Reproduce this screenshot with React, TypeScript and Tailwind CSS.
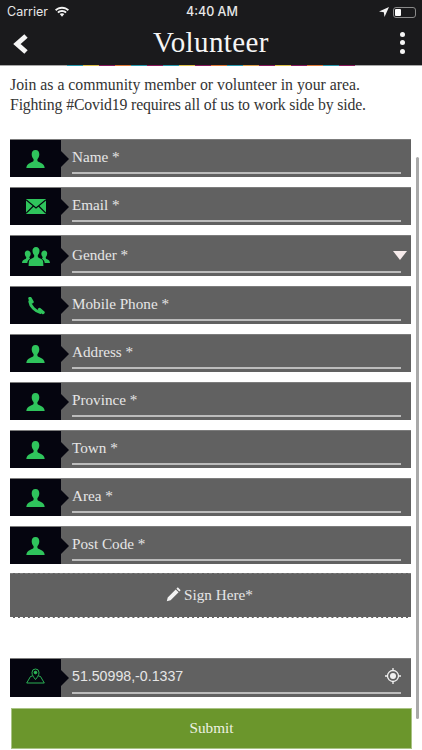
import { ReactNode } from 'react'

const serif = "font-['Georgia','Liberation_Serif','DejaVu_Serif',serif]"

const stripe = ['#2a9bb0', '#e0c04a', '#8a1a5c', '#e07a3a', '#2a9bb0', '#8a1a5c', '#2a9bb0', '#e0c04a', '#8a1a5c', '#e07a3a', '#2a9bb0', '#e0a04a', '#8a1a5c', '#e0c04a', '#8a1a5c', '#e07a3a', '#2a9bb0', '#8a1a5c']

function Person() {
  return (
    <svg width="19" height="18" viewBox="0 0 19 18" fill="#2fc45c">
      <path d="M9.500 0C6.800 0 5.600 2 5.700 4.600c.1 2 .9 3.600 1.900 4.600v1.300c0 1-1.500 1.600-3.600 2.500C2 13.800.7 14.900.3 18h18.400c-.4-3.100-1.700-4.200-3.700-5-2.100-.9-3.600-1.500-3.600-2.500V9.200c1-1 1.800-2.600 1.900-4.600C13.400 2 12.200 0 9.500 0z" />
    </svg>
  )
}

function Mail() {
  return (
    <svg width="20" height="15" viewBox="0 0 20 15">
      <rect width="20" height="15" fill="#2fc45c" />
      <path d="M0 .8 10 9 20 .8M0 14.300 7.400 7M20 14.300 12.600 7" fill="none" stroke="#05050f" strokeWidth="1.100" />
    </svg>
  )
}

function Group() {
  return (
    <svg width="28" height="19" viewBox="0 0 28 19" fill="#2fc45c">
      <path d="M14 0c-2.400 0-3.600 1.900-3.500 4.100.1 1.800.8 3.200 1.700 4.100v1.300c0 .9-1.300 1.400-3 2.200-1.300.6-2.200 1.500-2.400 3.300l-.2 4h14.800l-.2-4c-.2-1.800-1.100-2.700-2.400-3.300-1.700-.8-3-1.300-3-2.200V8.200c.9-.9 1.600-2.300 1.700-4.100C17.600 1.900 16.400 0 14 0z" />
      <path d="M5.500 3.500C3.700 3.500 2.700 5 2.800 6.800c.1 1.500.7 2.600 1.400 3.300v1c0 .7-1 1.100-2.300 1.700C.9 13.300.2 14.200 0 16h5.300c.2-2 1.200-3.400 2.900-4.200-.3-.4-.8-.7-.8-1.200v-.5c.7-.7 1.200-1.800 1.300-3.300C8.800 5 7.300 3.500 5.500 3.500z" />
      <path d="M22.500 3.500c1.800 0 2.800 1.500 2.700 3.300-.1 1.500-.7 2.600-1.400 3.300v1c0 .7 1 1.100 2.300 1.700 1 .5 1.700 1.400 1.900 3.200h-5.300c-.2-2-1.200-3.400-2.900-4.200.3-.4.8-.7.8-1.200v-.5c-.7-.7-1.200-1.800-1.300-3.300-.1-1.800 1.400-3.300 3.200-3.300z" />
    </svg>
  )
}

function Phone() {
  return (
    <svg width="18" height="18" viewBox="0 0 18 18" fill="none" stroke="#2fc45c" strokeLinecap="round">
      <path d="M2.700 4.500C3.300 9 8 14.500 13.500 15.500" strokeWidth="2.800" />
      <path d="M3 1.500 5 4.800M12.500 12.500l3.500 3" strokeWidth="3.400" />
    </svg>
  )
}

function MapPin() {
  return (
    <svg width="19" height="16" viewBox="0 0 19 16" fill="none" stroke="#2fc45c" strokeWidth="0.9">
      <path d="M9.500 11.500C7.500 9 6 7.300 6 4.500a3.500 3.500 0 0 1 7 0C13 7.300 11.500 9 9.500 11.500z" />
      <circle cx="9.500" cy="4.500" r="1.300" fill="#2fc45c" />
      <path d="M6.500 8 4.500 8.500 .7 15h17.600L14.500 8.500l-2-.5" />
    </svg>
  )
}

function Row({ icon, label, h = 'h-[38px]', sans, right, iconClass = '' }: { icon: ReactNode; label: string; h?: string; sans?: boolean; right?: ReactNode; iconClass?: string }) {
  return (
    <div className={`flex ${h} bg-[#616161] border-t border-[#7c7c7c]`}>
      <div className="relative flex w-[51px] shrink-0 items-center justify-center bg-[#05050f]">
        <div className={`flex ${iconClass}`}>{icon}</div>
        <div className="absolute top-1/2 -right-[8px] -translate-y-1/2 border-y-[8px] border-l-[8px] border-y-transparent border-l-[#05050f]" />
      </div>
      <div className="flex min-w-0 flex-1 flex-col pl-[11px] pr-[10px]">
        <div className={`flex flex-1 items-center justify-between pt-[3px] ${sans ? "font-['Liberation_Sans',sans-serif] text-[14.200px]" : `${serif} text-[15.200px]`} text-[#e6e6e6]`}>
          <span>{label}</span>
          {right}
        </div>
        <div className="mb-[3px] h-[2px] bg-[#bcbcbc]" />
      </div>
    </div>
  )
}

export default function App() {
  return (
    <div className="relative h-[750px] w-[422px] overflow-hidden bg-white">
      {/* header */}
      <div className="bg-[#1a1a1c]">
        <div className="flex h-[22px] items-center justify-between pl-[7px] pr-[6px] pt-[2px] font-['Inter',sans-serif] text-[12.500px] text-[#e8e8e8]">
          <div className="flex items-center gap-[6px]">
            <span>Carrier</span>
            <svg width="16" height="12" viewBox="0 0 16 12" fill="#f2f2f2">
              <path d="M8 2.800c2.200 0 4.200.8 5.700 2.200l1.300-1.400C13.100 1.800 10.700.7 8 .7S2.900 1.800 1 3.600L2.300 5C3.800 3.600 5.800 2.800 8 2.800z" />
              <path d="M8 6c1.300 0 2.500.5 3.400 1.300l1.300-1.400C11.400 4.700 9.800 4 8 4s-3.400.7-4.700 1.900l1.300 1.400C5.500 6.500 6.700 6 8 6z" />
              <path d="M8 7.200c-.9 0-1.700.3-2.300.9L8 10.700l2.300-2.600c-.6-.6-1.400-.9-2.300-.9z" />
            </svg>
          </div>
          <span className="absolute left-[186px] font-medium">4:40 AM</span>
          <div className="flex items-center gap-[4px]">
            <svg width="10" height="10" viewBox="0 0 10 10" fill="#f2f2f2">
              <path d="M10 0 0 4.500 4.800 5.200 5.500 10z" />
            </svg>
            <div className="flex h-[11px] w-[23px] items-center rounded-[3px] border border-[#8a8a8a] p-[1px]">
              <div className="h-full w-[6px] rounded-[1px] bg-white" />
            </div>
          </div>
        </div>
        <div className="relative flex h-[43px] items-center justify-between pl-[13px] pr-[17px]">
          <svg width="15" height="20" viewBox="0 0 15 20" fill="none" stroke="#f5f5f5" strokeWidth="5">
            <path d="M13 2 4 10l9 8" />
          </svg>
          <span className={`${serif} absolute left-0 right-0 pb-[2px] text-center text-[29px] leading-none tracking-[0.4px] text-[#f5f5f5]`}>Volunteer</span>
          <div className="flex flex-col gap-[3.500px] pb-[2px]">
            <div className="size-[5px] rounded-full bg-[#f5f5f5]" />
            <div className="size-[5px] rounded-full bg-[#f5f5f5]" />
            <div className="size-[5px] rounded-full bg-[#f5f5f5]" />
          </div>
        </div>
      </div>
      {/* rainbow edge under the bar */}
      <div className="flex h-[1px] justify-center bg-[#a8a8a8]">
        {stripe.map((c, i) => (
          <div key={i} className="h-full w-[16px]" style={{ backgroundColor: c }} />
        ))}
      </div>

      <p className={`${serif} px-[10px] pt-[9px] text-[15.800px] leading-[19.500px] text-[#333]`}>
        Join as a community member or volunteer in your area.
        <br />
        <span className="tracking-[-0.15px]">Fighting #Covid19 requires all of us to work side by side.</span>
      </p>

      <div className="mt-[25px] flex flex-col pl-[10px] pr-[11px]">
        <div className="flex flex-col gap-[10px]">
          <Row icon={<Person />} label="Name *" />
          <Row icon={<Mail />} label="Email *" />
          <Row
            icon={<Group />}
            label="Gender *"
            h="h-[41px]"
            right={<div className="mr-[-6px] mt-[1px] border-x-[7px] border-t-[9px] border-x-transparent border-t-[#f7ecec]" />}
          />
          <Row icon={<Phone />} label="Mobile Phone *" />
          <Row icon={<Person />} label="Address *" />
          <Row icon={<Person />} label="Province *" />
          <Row icon={<Person />} label="Town *" />
          <Row icon={<Person />} label="Area *" />
          <Row icon={<Person />} label="Post Code *" />
        </div>
        <div className={`${serif} mt-[9px] flex h-[45px] items-center justify-center gap-[3px] border-t border-b border-t-[#7c7c7c] border-b-white border-dashed bg-[#616161] text-[15.200px] text-[#e6e6e6]`}>
          <svg width="15" height="15" viewBox="0 0 15 15" fill="#f2f2f2" className="-ml-[2px] mb-[2px]">
            <path d="M11.800.3 14.700 3.200 13.300 4.600 10.400 1.700zM9.700 2.400l2.900 2.900-8 8-3.800.9.900-3.800z" />
          </svg>
          <span>Sign Here*</span>
        </div>
        <div className="mt-[40px]">
          <Row
            icon={<MapPin />}
            iconClass="mb-[5px]"
            label="51.50998,-0.1337"
            h="h-[39px]"
            sans
            right={
              <svg width="16" height="16" viewBox="0 0 16 16" fill="none" stroke="#f2f2f2" className="mb-[3px]">
                <circle cx="8" cy="8" r="5.500" strokeWidth="1.300" />
                <circle cx="8" cy="8" r="3" fill="#f2f2f2" stroke="none" />
                <path d="M8 0v3M8 13v3M0 8h3M13 8h3" strokeWidth="1.300" />
              </svg>
            }
          />
        </div>
        <div className={`${serif} ml-[1px] mr-[-1px] mt-[11px] flex h-[41px] items-center justify-center border border-[#a9c384] bg-[#6b962c] text-[15.200px] text-[#eef2e2]`}>
          Submit
        </div>
      </div>

      {/* scroll indicator */}
      <div className="absolute left-[416px] top-[157px] h-[562px] w-[3px] rounded-full bg-[#a9a9a9]" />
    </div>
  )
}
